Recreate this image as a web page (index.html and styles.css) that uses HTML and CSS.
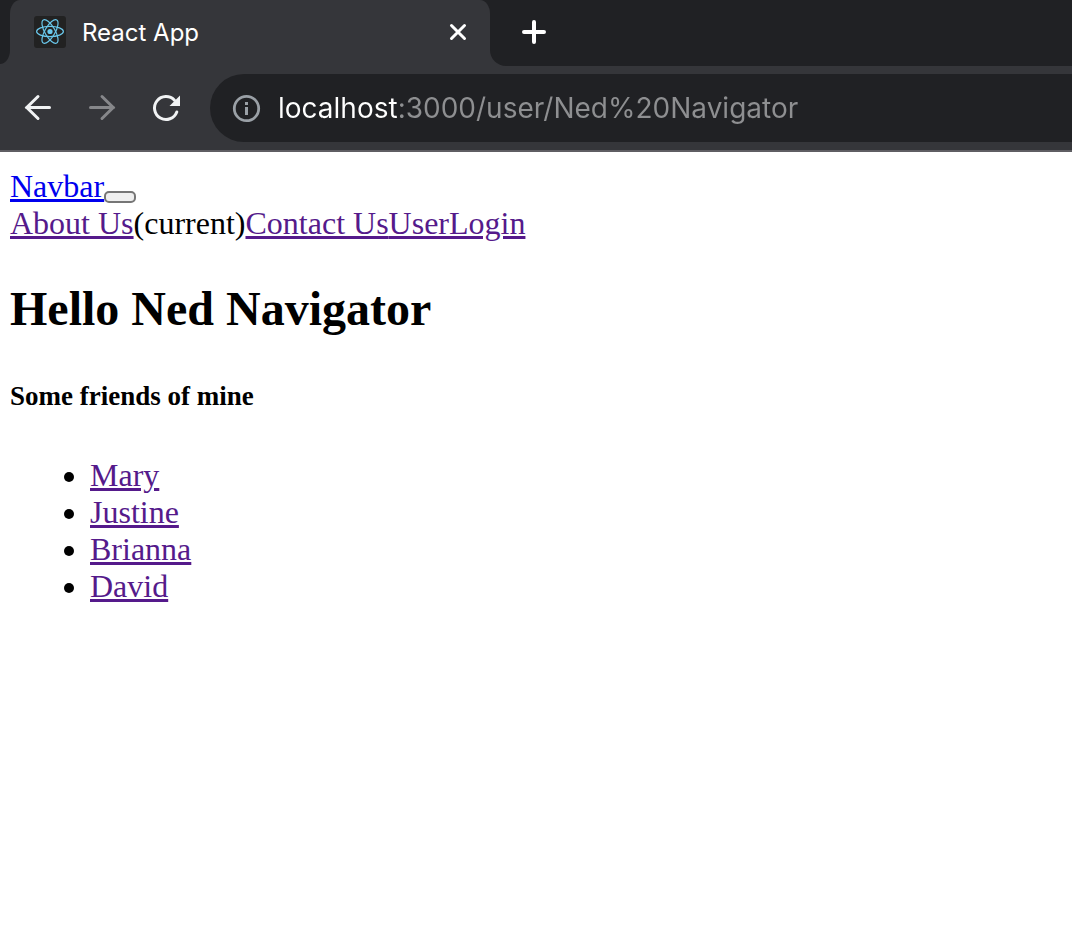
FILE: index.html
```
<!DOCTYPE html>
<html lang="en">
<head>
<meta charset="utf-8">
<meta name="viewport" content="width=device-width, initial-scale=1">
<title>React App</title>
<link rel="stylesheet" href="styles.css">
</head>
<body>
<header class="browser">
  <div class="tab-strip">
    <div class="strip-start"></div>
    <div class="tab-slot">
      <div class="tab">
        <svg class="favicon" viewBox="0 0 32 32" aria-hidden="true">
          <rect width="32" height="32" rx="3" fill="#222"/>
          <g fill="none" stroke="#6ac8ec" stroke-width="1.2">
            <ellipse cx="16" cy="15.5" rx="13.4" ry="5.1"/>
            <ellipse cx="16" cy="15.5" rx="13.4" ry="5.1" transform="rotate(60 16 15.5)"/>
            <ellipse cx="16" cy="15.5" rx="13.4" ry="5.1" transform="rotate(120 16 15.5)"/>
          </g>
          <circle cx="16" cy="15.5" r="2.6" fill="#6ac8ec"/>
        </svg>
        <span class="tab-title">React App</span>
        <button class="icon-button" type="button" aria-label="Close tab">
          <svg viewBox="0 0 32 32"><path d="M9.500 9.500 22.500 22.500M22.500 9.500 9.500 22.500" stroke-width="3"/></svg>
        </button>
      </div>
    </div>
    <div class="strip-rest">
      <button class="icon-button" type="button" aria-label="New tab">
        <svg viewBox="0 0 32 32"><path d="M16 6V26M6 16H26" stroke-width="4"/></svg>
      </button>
    </div>
  </div>
  <div class="toolbar">
    <div class="nav-buttons">
      <button class="icon-button" type="button" aria-label="Back">
        <svg viewBox="0 0 32 32"><path d="M27.500 15.500H4.500M16 4.500 4.800 15.500 16 26.500" stroke-width="3"/></svg>
      </button>
      <button class="icon-button forward" type="button" aria-label="Forward" disabled>
        <svg viewBox="0 0 32 32"><path d="M4.500 15.500H27.500M16 4.500 27.200 15.500 16 26.500" stroke-width="3"/></svg>
      </button>
      <button class="icon-button" type="button" aria-label="Reload">
        <svg viewBox="0 0 32 32"><path d="M26.800 20A11.500 11.500 0 1 1 24.500 8.200" stroke-width="3"/><path class="solid" d="M30 3.500V14H19.500Z"/></svg>
      </button>
    </div>
    <div class="address">
      <svg class="info" viewBox="0 0 32 32" aria-hidden="true">
        <circle cx="16.500" cy="16.500" r="12.200" fill="none" stroke="#9aa0a6" stroke-width="2.800"/>
        <path d="M15 10h3v3h-3zM15 15h3v8h-3z" fill="#9aa0a6"/>
      </svg>
      <input class="url" type="text" aria-label="Address" spellcheck="false" value="localhost:3000/user/Ned%20Navigator">
    </div>
  </div>
</header>
<main class="page">
  <nav>
    <a class="brand" href="#">Navbar</a><button class="toggler" type="button" aria-label="Toggle navigation"></button>
    <div><a href="#about">About Us</a>(current)<a href="#contact">Contact Us</a><a href="#user">User</a><a href="#login">Login</a></div>
  </nav>
  <h1>Hello Ned Navigator</h1>
  <h5>Some friends of mine</h5>
  <ul>
    <li><a href="#mary">Mary</a></li>
    <li><a href="#justine">Justine</a></li>
    <li><a href="#brianna">Brianna</a></li>
    <li><a href="#david">David</a></li>
  </ul>
</main>
</body>
</html>
```
FILE: styles.css
```
* { box-sizing: border-box; }

body {
  margin: 0;
  background: #fff;
  color: #000;
}

.browser {
  background: #35363a;
  border-bottom: 2px solid #5f5e63;
  font-family: Inter, Roboto, "Liberation Sans", sans-serif;
}

.tab-strip {
  display: flex;
  height: 66px;
}

.strip-start {
  width: 10px;
  margin-bottom: 2px;
  background: #202124;
  border-bottom-right-radius: 10px 14px;
}

.tab-slot {
  flex: 0 1 480px;
  background: linear-gradient(#202124 16px, #35363a 16px);
}

.tab {
  display: flex;
  align-items: center;
  gap: 16px;
  height: 64px;
  padding: 0 16px 0 24px;
  background: #35363a;
  border-radius: 10px 10px 0 0 / 14px 14px 0 0;
}

.favicon {
  flex: none;
  width: 32px;
  height: 32px;
}

.tab-title {
  flex: 1;
  color: #fff;
  font-size: 24px;
}

.strip-rest {
  flex: 1;
  padding: 16px 28px;
  background: #202124;
  border-bottom-left-radius: 16px;
}

.icon-button {
  display: block;
  flex: none;
  width: 32px;
  height: 32px;
  padding: 0;
  border: 0;
  background: none;
  color: #fff;
}

.icon-button svg {
  display: block;
  fill: none;
  stroke: currentColor;
  stroke-linecap: round;
}

.icon-button .solid {
  fill: currentColor;
  stroke: none;
}

.nav-buttons .icon-button { color: #f1f3f4; }
.nav-buttons .forward { color: #86878a; }

.toolbar {
  display: flex;
  align-items: center;
  gap: 28px;
  padding: 8px 0 8px 22px;
}

.nav-buttons {
  display: flex;
  gap: 32px;
}

.address {
  display: flex;
  flex: 1;
  align-items: center;
  gap: 16px;
  height: 68px;
  padding-left: 20px;
  background: #202124;
  border-radius: 34px 0 0 34px;
}

.info {
  flex: none;
  width: 32px;
  height: 32px;
}

.url {
  flex: 1;
  min-width: 0;
  padding: 0;
  border: 0;
  outline: 0;
  font: 28px/40px Inter, Roboto, "Liberation Sans", sans-serif;
  color: transparent;
  caret-color: #fff;
  background: linear-gradient(to right, #fff 120px, #8e8f91 120px);
  background-clip: text;
  -webkit-background-clip: text;
}

.page {
  padding: 16px 10px;
  font: 32px/37px "Liberation Serif", "Times New Roman", serif;
}

a { color: #551a8b; }
.brand { color: #00e; }

.toggler {
  width: 32px;
  height: 12px;
  padding: 0;
  border: 2px solid #767676;
  border-radius: 5px;
  background: #efefef;
  vertical-align: -4px;
}

h1 {
  margin: 39px 0;
  font-size: 48px;
  line-height: 55px;
}

h5 {
  margin: 45px 0;
  font-size: 27px;
  line-height: 31px;
}

ul {
  margin: 32px 0;
  padding-left: 80px;
}
```
